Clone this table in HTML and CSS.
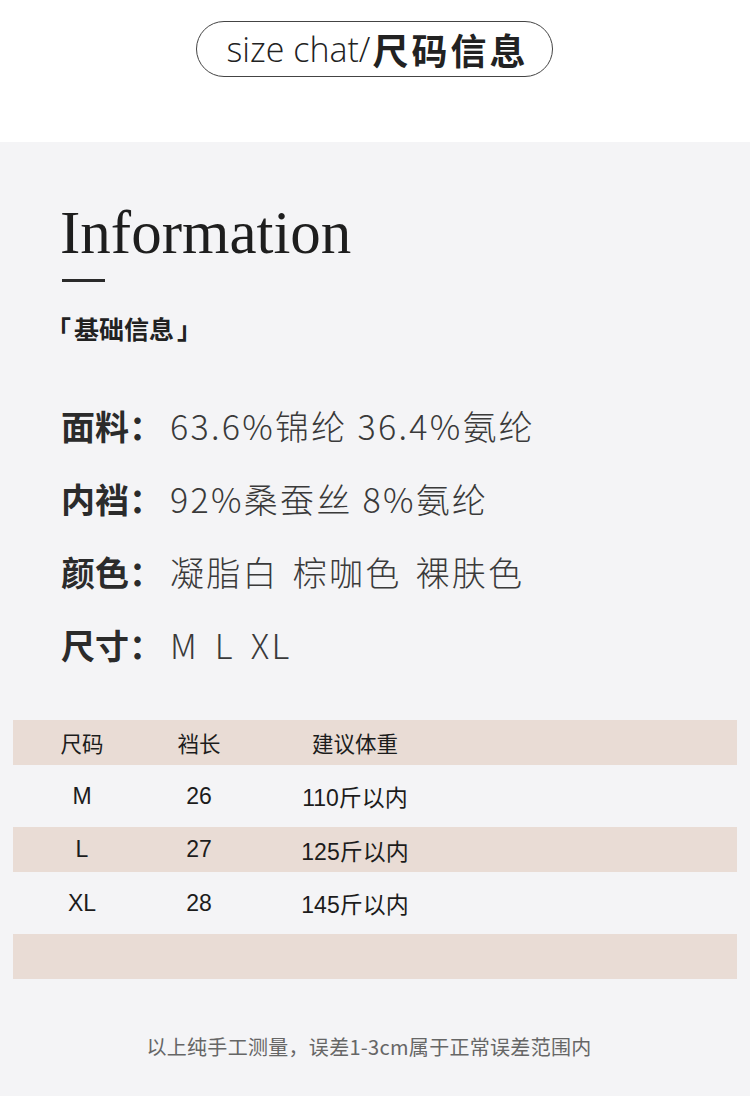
FILE: index.html
```html
<!DOCTYPE html>
<html lang="zh">
<head>
<meta charset="utf-8">
<title>size chat</title>
<link rel="stylesheet" href="styles.css">
</head>
<body>
<header class="top">
  <div class="pill"><span class="pill-en">size chat/</span><span class="pill-cn">尺码信息</span></div>
</header>
<main class="info">
  <h1 class="title">Information</h1>
  <div class="dash"></div>
  <h2 class="sub"><span class="br">「</span>基础信息<span class="br">」</span></h2>
  <div class="rows">
    <div class="row"><span class="label">面料：</span><span class="value">63.6%锦纶 36.4%氨纶</span></div>
    <div class="row"><span class="label">内裆：</span><span class="value">92%桑蚕丝 8%氨纶</span></div>
    <div class="row"><span class="label">颜色：</span><span class="value wide">凝脂白 棕咖色 裸肤色</span></div>
    <div class="row"><span class="label">尺寸：</span><span class="value sizes">M L XL</span></div>
  </div>
  <div class="table">
    <div class="tr pink short head"><span>尺码</span><span>裆长</span><span>建议体重</span><span></span></div>
    <div class="tr tall"><span>M</span><span>26</span><span>110斤以内</span><span></span></div>
    <div class="tr pink short"><span>L</span><span>27</span><span>125斤以内</span><span></span></div>
    <div class="tr tall"><span>XL</span><span>28</span><span>145斤以内</span><span></span></div>
    <div class="tr pink short"><span></span><span></span><span></span><span></span></div>
  </div>
  <p class="note">以上纯手工测量，误差1-3cm属于正常误差范围内</p>
</main>
</body>
</html>
```
FILE: styles.css
```css
html, body {
  margin: 0;
  padding: 0;
}
body {
  width: 750px;
  height: 1096px;
  overflow: hidden;
  background: #f4f4f6;
  font-family: "Noto Sans CJK SC", "Noto Sans", sans-serif;
  color: #222;
}
.top {
  background: #ffffff;
  height: 142px;
  display: flex;
  justify-content: center;
  align-items: flex-start;
}
.pill {
  margin-top: 21px;
  margin-left: -1px;
  width: 355px;
  height: 54px;
  box-sizing: content-box;
  border: 1.5px solid #444;
  border-radius: 28px;
  display: flex;
  align-items: center;
  justify-content: center;
  gap: 2px;
  color: #222;
}
.pill-en {
  font-family: "Open Sans", "Noto Sans", sans-serif;
  font-weight: 300;
  font-size: 34px;
  line-height: 54px;
  letter-spacing: 0;
}
.pill-cn {
  font-family: "Noto Sans CJK SC", sans-serif;
  font-weight: 700;
  font-size: 36px;
  line-height: 54px;
  letter-spacing: 3px;
  margin-right: -6px;
}
.info {
  padding-top: 60px;
}
.title {
  margin: 0 0 0 60px;
  font-family: "Liberation Serif", serif;
  font-weight: 400;
  font-size: 61px;
  line-height: 61px;
  color: #1e1e1e;
}
.dash {
  margin: 16px 0 0 62px;
  width: 43px;
  height: 3px;
  background: #2a2a2a;
}
.sub {
  margin: 33px 0 0 43px;
  font-size: 25px;
  line-height: 26px;
  font-weight: 700;
  color: #222;
}
.br {
  display: inline-block;
  margin: 0 3px;
}
.rows {
  margin: 65px 0 0 61px;
  display: flex;
  flex-direction: column;
  gap: 33px;
}
.row {
  display: flex;
  align-items: center;
  height: 40px;
  line-height: 40px;
}
.label {
  width: 109px;
  font-size: 34px;
  font-weight: 700;
  color: #2b2b2b;
}
.value {
  font-size: 34px;
  font-weight: 300;
  color: #3a3a3a;
  letter-spacing: 2.3px;
}
.value.wide {
  word-spacing: 4px;
}
.value.sizes {
  word-spacing: 6px;
}
.table {
  margin: 55px 13px 0 13px;
}
.tr {
  display: grid;
  grid-template-columns: 138px 96px 216px 1fr;
  align-items: center;
  font-family: "Liberation Sans", "Noto Sans CJK SC", sans-serif;
  font-size: 23px;
  color: #1c1c1c;
  text-align: center;
}
.tr.pink {
  background: #e9dcd5;
}
.tr.short {
  height: 45px;
}
.tr.tall {
  height: 62px;
}
.tr.head {
  font-family: "Noto Sans CJK SC", sans-serif;
  font-size: 21.5px;
}
.note {
  margin: 58px 12px 0 0;
  text-align: center;
  font-size: 20px;
  line-height: 20px;
  color: #666;
  letter-spacing: 0.3px;
}
```
